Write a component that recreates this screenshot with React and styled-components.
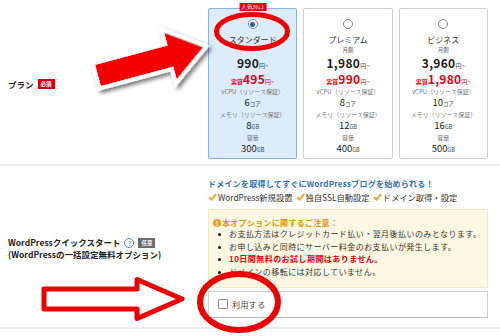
import React from 'react'
import styled, { createGlobalStyle } from 'styled-components'

const plans = [
  { name: 'スタンダード', price: '990', real: '495', cpu: '6', mem: '8', disk: '300', selected: true },
  { name: 'プレミアム', price: '1,980', real: '990', cpu: '8', mem: '12', disk: '400' },
  { name: 'ビジネス', price: '3,960', real: '1,980', cpu: '10', mem: '16', disk: '500' },
]

const notes = [
  { text: 'お支払方法はクレジットカード払い・翌月後払いのみとなります。' },
  { text: 'お申し込みと同時にサーバー料金のお支払いが発生します。' },
  { text: '10日間無料のお試し期間はありません。', warn: true },
  { text: 'ドメインの移転には対応していません。' },
]

const checks = ['WordPress新規設置', '独自SSL自動設定', 'ドメイン取得・設定']

export default function App() {
  return (
    <>
      <GlobalStyle />
      <Page>
        <Row $top>
          <PlanLabel>
            プラン <Tag $color="#d9000d">必須</Tag>
          </PlanLabel>
          <Cards>
            {plans.map((p) => (
              <Card key={p.name} $selected={p.selected}>
                {p.selected && <Ribbon>人気No.1</Ribbon>}
                <Radio $checked={p.selected} />
                <PlanName>{p.name}</PlanName>
                <Monthly $hidden={p.selected}>月額</Monthly>
                <Price>
                  {p.price}
                  <small>円~</small>
                </Price>
                <RealPrice>
                  <small>実質</small>
                  {p.real}
                  <small>円~</small>
                </RealPrice>
                <Spec>
                  <SpecLabel>vCPU（リソース保証）</SpecLabel>
                  <SpecValue>
                    {p.cpu}
                    <small>コア</small>
                  </SpecValue>
                </Spec>
                <Spec>
                  <SpecLabel>メモリ（リソース保証）</SpecLabel>
                  <SpecValue>
                    {p.mem}
                    <small>GB</small>
                  </SpecValue>
                </Spec>
                <Spec>
                  <SpecLabel>容量</SpecLabel>
                  <SpecValue>
                    {p.disk}
                    <small>GB</small>
                  </SpecValue>
                </Spec>
              </Card>
            ))}
          </Cards>
        </Row>

        <Row>
          <Label>
            <div>
              WordPressクイックスタート <Help>?</Help> <Tag $color="#6b6b6b">任意</Tag>
            </div>
            <div>(WordPressの一括設定無料オプション)</div>
          </Label>
          <Option>
            <Lead>ドメインを取得してすぐにWordPressブログを始められる！</Lead>
            <Checks>
              {checks.map((c) => (
                <span key={c}>
                  <svg width="9" height="8" viewBox="0 0 9 8">
                    <path d="M1 4.2 L3.4 6.6 L8 1.2" fill="none" stroke="#f5a01a" strokeWidth="1.8" />
                  </svg>
                  {c}
                </span>
              ))}
            </Checks>
            <Notice>
              <NoticeTitle>
                <Bang>!</Bang>本オプションに関するご注意：
              </NoticeTitle>
              <NoteList>
                {notes.map((n) => (
                  <Note key={n.text} $warn={n.warn}>
                    {n.text}
                  </Note>
                ))}
              </NoteList>
            </Notice>
            <CheckRow>
              <Box />
              利用する
            </CheckRow>
          </Option>
        </Row>

        <Marks viewBox="0 0 500 336" width="500" height="336">
          <defs>
            <filter id="sh" x="-20%" y="-20%" width="140%" height="160%">
              <feDropShadow dx="2" dy="3" stdDeviation="2.2" floodColor="#000" floodOpacity="0.55" />
            </filter>
          </defs>
          <g transform="translate(96 76) rotate(-15)" filter="url(#sh)">
            <polygon
              points="0,-13 75,-13 75,-28 114,0 75,28 75,13 0,13"
              fill="#f40000"
              stroke="#fff"
              strokeWidth="4"
              strokeLinejoin="miter"
            />
          </g>
          <ellipse cx="252" cy="31.5" rx="35.5" ry="17" fill="none" stroke="#ee0000" strokeWidth="5" />
          <polygon
            points="44,289 137,289 137,279.5 182,299 137,318.5 137,309 44,309"
            fill="#fff"
            stroke="#ee0000"
            strokeWidth="5"
            strokeLinejoin="round"
          />
          <ellipse cx="239" cy="302" rx="39" ry="28" fill="none" stroke="#ee0000" strokeWidth="6" />
        </Marks>
      </Page>
    </>
  )
}

const GlobalStyle = createGlobalStyle`
body{
  margin:0;
  background:#fff;
  font-family: "Noto Sans CJK JP", "Noto Sans", sans-serif;
  color:#222;
}
`

const Page = styled.div`
position: relative;
width: 500px;
height: 336px;
overflow: hidden;
background: #fff;
`

const Row = styled.div`
display: grid;
grid-template-columns: 208px 280px;
align-items: center;
padding: ${(p) => (p.$top ? '8px 0 5px' : '12px 0 9px')};
border-bottom: 2px solid #ececec;
`

const Label = styled.div`
padding-left: 8px;
font-size: 8.5px;
font-weight: 700;
line-height: 12px;
display: flex;
flex-direction: column;
`

const PlanLabel = styled(Label)`
flex-direction: row;
align-items: center;
gap: 4px;
`

const Tag = styled.span`
display: inline-block;
background: ${(p) => p.$color};
color: #fff;
font-size: 5.5px;
line-height: 10px;
padding: 0 3px;
vertical-align: middle;
font-weight: 700;
`

const Help = styled.span`
display: inline-flex;
align-items: center;
justify-content: center;
width: 8px;
height: 8px;
border: 1px solid #4a86c8;
border-radius: 50%;
color: #4a86c8;
font-size: 6.5px;
line-height: 1;
font-weight: 400;
vertical-align: middle;
margin: 0 2px;
`

const Cards = styled.div`
display: flex;
gap: 6px;
`

const Card = styled.div`
position: relative;
flex: 1;
display: flex;
flex-direction: column;
align-items: center;
height: 151px;
box-sizing: border-box;
padding-top: 10px;
border: 1px solid ${(p) => (p.$selected ? '#89b2de' : '#cfcfcf')};
background: ${(p) => (p.$selected ? '#dcecfb' : '#fff')};
border-radius: 2px;
small{
  line-height: 1;
}
`

const Ribbon = styled.div`
position: absolute;
top: -6px;
left: 50%;
transform: translateX(-50%);
background: #e8000b;
color: #fff;
font-family: "Liberation Serif", serif;
font-size: 5.5px;
line-height: 8px;
padding: 0 2px;
white-space: nowrap;
`

const Radio = styled.span`
flex: none;
width: 10px;
height: 10px;
box-sizing: border-box;
border-radius: 50%;
border: 1px solid ${(p) => (p.$checked ? '#7a8ea6' : '#8a8a8a')};
background: #fff;
display: flex;
align-items: center;
justify-content: center;
&::after{
  content: '';
  width: 5px;
  height: 5px;
  border-radius: 50%;
  background: ${(p) => (p.$checked ? '#1f5fb8' : 'transparent')};
}
`

const PlanName = styled.div`
margin-top: 5px;
font-size: 8px;
line-height: 12px;
height: 12px;
color: #333;
`

const Monthly = styled.div`
margin-top: 1px;
font-size: 5.5px;
line-height: 7px;
height: 7px;
color: #666;
visibility: ${(p) => (p.$hidden ? 'hidden' : 'visible')};
`

const Price = styled.div`
margin-top: 3px;
display: flex;
align-items: baseline;
height: 12px;
font-size: 12px;
line-height: 12px;
font-weight: 700;
color: #222;
letter-spacing: 0.3px;
small{
  font-size: 6px;
  font-weight: 400;
  color: #444;
  letter-spacing: 0;
}
`

const RealPrice = styled(Price)`
margin-top: 4px;
color: #e60012;
small{
  color: #e60012;
}
small:first-child{
  font-weight: 700;
}
`

const Spec = styled.div`
margin-top: 2px;
display: flex;
flex-direction: column;
align-items: center;
`

const SpecLabel = styled.div`
font-size: 6px;
line-height: 9px;
height: 9px;
color: #777;
white-space: nowrap;
`

const SpecValue = styled.div`
display: flex;
align-items: baseline;
height: 12px;
font-size: 9.5px;
line-height: 12px;
color: #222;
small{
  font-size: 5.5px;
  color: #444;
}
`

const Option = styled.div`
display: flex;
flex-direction: column;
`

const Lead = styled.div`
font-size: 8px;
font-weight: 700;
line-height: 12px;
color: #2c70c2;
letter-spacing: 0.25px;
white-space: nowrap;
`

const Checks = styled.div`
margin-top: 1px;
display: flex;
gap: 3px;
font-size: 8.3px;
line-height: 12px;
color: #333;
white-space: nowrap;
span{
  display: flex;
  align-items: center;
  gap: 1px;
}
`

const Notice = styled.div`
margin-top: 6px;
background: #fdf8e3;
border: 1px solid #f3e9c6;
padding: 7px 6px 8px 4px;
`

const NoticeTitle = styled.div`
display: flex;
align-items: center;
gap: 1px;
font-size: 8px;
font-weight: 700;
line-height: 11px;
color: #e0960c;
letter-spacing: 0.3px;
`

const Bang = styled.span`
width: 8px;
height: 8px;
border-radius: 50%;
background: #eea224;
color: #fff;
font-size: 6.5px;
line-height: 8px;
text-align: center;
font-weight: 700;
`

const NoteList = styled.ul`
margin: 0;
padding: 0;
list-style: none;
`

const Note = styled.li`
position: relative;
padding-left: 16px;
font-size: 8px;
line-height: 12.7px;
letter-spacing: 0.45px;
white-space: nowrap;
color: ${(p) => (p.$warn ? '#e60012' : '#333')};
font-weight: ${(p) => (p.$warn ? 700 : 400)};
&::before{
  content: '';
  position: absolute;
  left: 5px;
  top: 5px;
  width: 3px;
  height: 3px;
  border-radius: 50%;
  background: #111;
}
`

const CheckRow = styled.label`
margin-top: 3px;
height: 27px;
box-sizing: border-box;
display: flex;
align-items: center;
gap: 4px;
padding-left: 9px;
border: 1px solid #d0d0d0;
border-bottom-color: #bdbdbd;
background: #fff;
font-size: 8px;
color: #444;
letter-spacing: 0.4px;
`

const Box = styled.span`
width: 10px;
height: 10px;
box-sizing: border-box;
border: 1px solid #8f8f8f;
border-radius: 1px;
background: #fff;
`

const Marks = styled.svg`
position: absolute;
left: 0;
top: 0;
pointer-events: none;
`
